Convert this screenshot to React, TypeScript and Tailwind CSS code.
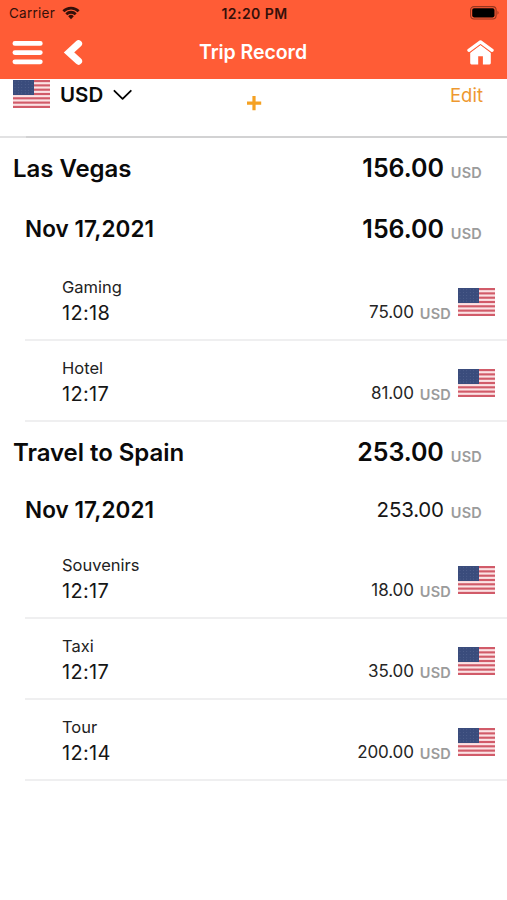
interface Expense {
  name: string;
  time: string;
  amount: string;
}

interface Trip {
  title: string;
  total: string;
  date: string;
  dayTotal: string;
  boldDay: boolean;
  expenses: Expense[];
}

const TRIPS: Trip[] = [
  {
    title: "Las Vegas",
    total: "156.00",
    date: "Nov 17,2021",
    dayTotal: "156.00",
    boldDay: true,
    expenses: [
      { name: "Gaming", time: "12:18", amount: "75.00" },
      { name: "Hotel", time: "12:17", amount: "81.00" },
    ],
  },
  {
    title: "Travel to Spain",
    total: "253.00",
    date: "Nov 17,2021",
    dayTotal: "253.00",
    boldDay: false,
    expenses: [
      { name: "Souvenirs", time: "12:17", amount: "18.00" },
      { name: "Taxi", time: "12:17", amount: "35.00" },
      { name: "Tour", time: "12:14", amount: "200.00" },
    ],
  },
];

const STRIPES = [0, 2, 4, 6, 8, 10, 12];
const STAR_ROWS = [0, 1, 2, 3, 4];
const STAR_COLS = [0, 1, 2, 3, 4, 5];

function Flag() {
  return (
    <svg viewBox="0 0 37 28" className="w-[37px] h-7 shrink-0" preserveAspectRatio="none">
      <rect width="37" height="28" fill="#fbe3e5" />
      {STRIPES.map((i) => (
        <rect key={i} y={(i * 28) / 13} width="37" height={28 / 13} fill="#d15b69" />
      ))}
      <rect width="21" height="15" fill="#3a4c7c" />
      {STAR_ROWS.map((r) =>
        STAR_COLS.map((c) => (
          <circle key={`${r}-${c}`} cx={2 + c * 3.4} cy={1.8 + r * 2.8} r="0.4" fill="#6f7da5" />
        ))
      )}
    </svg>
  );
}

function StatusBar() {
  return (
    <div className="grid grid-cols-3 items-center h-[26px] pl-[9px] pr-[7px] text-[#35100a]">
      <div className="flex items-center gap-[7px]">
        <span className="pt-px text-[13.5px] tracking-[0.25px]">Carrier</span>
        <svg viewBox="0 0 18 14" className="w-[18px] h-[14px]">
          <path d="M0.4 4.3 A12.3 12.3 0 0 1 17.6 4.3 L15.7 6.3 A9.5 9.5 0 0 0 2.3 6.3 Z" fill="currentColor" />
          <path d="M3.3 7.2 A8.1 8.1 0 0 1 14.7 7.2 L12.8 9.2 A5.4 5.4 0 0 0 5.2 9.2 Z" fill="currentColor" />
          <path d="M6.2 10.2 A4 4 0 0 1 11.8 10.2 L9 13.2 Z" fill="currentColor" />
        </svg>
      </div>
      <span className="text-center text-[14px] font-semibold tracking-[0.45px] whitespace-nowrap">12:20 PM</span>
      <svg viewBox="0 0 30 14" className="w-[30px] h-[14px] justify-self-end">
        <rect x="0.6" y="0.6" width="25.5" height="12.4" rx="3.4" fill="none" stroke="#96351f" strokeWidth="1.1" />
        <rect x="2.2" y="2.2" width="22.3" height="9.2" rx="1.8" fill="#000" />
        <path d="M27.5 4.8 Q29.6 6.8 27.5 8.8 Z" fill="#96351f" />
      </svg>
    </div>
  );
}

function NavBar() {
  return (
    <div className="grid grid-cols-3 items-center h-[53px] pl-3 pr-[13px] text-white">
      <div className="flex items-center gap-5">
        <svg viewBox="0 0 31 24" className="w-[31px] h-6" stroke="currentColor" strokeWidth="4.8" strokeLinecap="round">
          <path d="M2.9 2.4H28.3M2.9 11.6H28.3M2.9 20.8H28.3" />
        </svg>
        <svg viewBox="0 0 20 26" className="w-5 h-[26px]" fill="none" stroke="currentColor" strokeWidth="7" strokeLinecap="round">
          <path d="M15.6 3.7L6 12.4L15.6 21.2" />
        </svg>
      </div>
      <h1 className="text-center text-[19.5px] font-semibold tracking-[-0.05px] whitespace-nowrap">Trip Record</h1>
      <svg viewBox="0 0 27 25" className="w-[27px] h-[25px] justify-self-end">
        <path d="M3.2 12.4L13.5 5L23.8 12.4V23.1Q23.8 24.4 22.5 24.4H15.9V16.2H11.2V24.4H4.5Q3.2 24.4 3.2 23.1Z" fill="currentColor" />
        <path d="M1.5 11.2L13.5 1.8L25.5 11.2" fill="none" stroke="#ff5c36" strokeWidth="4.8" />
        <path d="M1.9 10.4L13.5 1.9L25.1 10.4" fill="none" stroke="currentColor" strokeWidth="3.2" strokeLinecap="round" strokeLinejoin="round" />
      </svg>
    </div>
  );
}

function Toolbar() {
  return (
    <div>
      <div className="grid grid-cols-3 h-[57px] px-[13px]">
        <div className="flex items-center h-[30px]">
          <Flag />
          <span className="ml-[10px] pt-0.5 text-[20.5px] font-semibold">USD</span>
          <svg viewBox="0 0 20 12" className="ml-[10px] mt-0.5 w-5 h-3" fill="none" stroke="#000" strokeWidth="1.8" strokeLinecap="round" strokeLinejoin="round">
            <path d="M1.4 1.8L9.6 9.8L17.8 1.8" />
          </svg>
        </div>
        <div className="flex justify-center pt-4">
          <svg viewBox="0 0 16 16" className="ml-px w-4 h-4" stroke="#f5a122" strokeWidth="3.2">
            <path d="M8 1V15.2M1 8.2H15.2" />
          </svg>
        </div>
        <button className="justify-self-end h-[33px] mr-[11px] text-[18.5px] text-[#ee9830]">Edit</button>
      </div>
      <div className="flex h-0.5">
        <div className="w-[26px] bg-[#e2e2e3]" />
        <div className="flex-1 bg-[#d2d2d3]" />
      </div>
    </div>
  );
}

function Total({ amount, bold }: { amount: string; bold: boolean }) {
  return (
    <div className="flex items-baseline">
      <span className={bold ? "text-[25px] font-semibold tracking-[-0.05px]" : "text-[20.5px] tracking-[-0.2px] text-[#161616]"}>{amount}</span>
      <span className="ml-[7px] pt-0.5 translate-y-px text-[14.5px] font-semibold tracking-[0.2px] text-[#9b9b9b]">USD</span>
    </div>
  );
}

function ExpenseRow({ expense }: { expense: Expense }) {
  return (
    <div className="flex justify-between h-[81px] ml-[25px] pl-[37px] pr-3 border-b-2 border-[#efeff0]">
      <div className="pt-4">
        <div className="text-[16.5px] leading-[23px] text-[#222]">{expense.name}</div>
        <div className="text-[20px] leading-[28px] tracking-[0.3px] text-[#161616]">{expense.time}</div>
      </div>
      <div className="flex">
        <div className="flex items-baseline pt-10">
          <span className="text-[17px] leading-[25px] tracking-[-0.1px] text-[#252525]">{expense.amount}</span>
          <span className="ml-[6px] translate-y-px text-[14.5px] font-semibold tracking-[0.2px] text-[#9b9b9b]">USD</span>
        </div>
        <div className="ml-[7px] pt-[28px]">
          <Flag />
        </div>
      </div>
    </div>
  );
}

export default function App() {
  return (
    <div className="w-full h-[900px] overflow-hidden bg-white text-[#0a0a0a] font-['Inter',sans-serif]">
      <header className="bg-[#ff5c36]">
        <StatusBar />
        <NavBar />
      </header>
      <Toolbar />
      {TRIPS.map((trip) => (
        <section key={trip.title}>
          <div className="flex items-center justify-between h-[61px] pl-[13px] pr-[25px]">
            <h2 className="text-[24px] font-semibold tracking-[-0.05px]">{trip.title}</h2>
            <Total amount={trip.total} bold />
          </div>
          <div className={`flex items-center justify-between pl-[25px] pr-[25px] ${trip.boldDay ? "h-[61px]" : "h-[55px]"}`}>
            <h3 className="pb-0.5 text-[22.5px] font-semibold tracking-[0.05px]">{trip.date}</h3>
            <Total amount={trip.dayTotal} bold={trip.boldDay} />
          </div>
          {trip.expenses.map((e) => (
            <ExpenseRow key={e.name} expense={e} />
          ))}
        </section>
      ))}
    </div>
  );
}
